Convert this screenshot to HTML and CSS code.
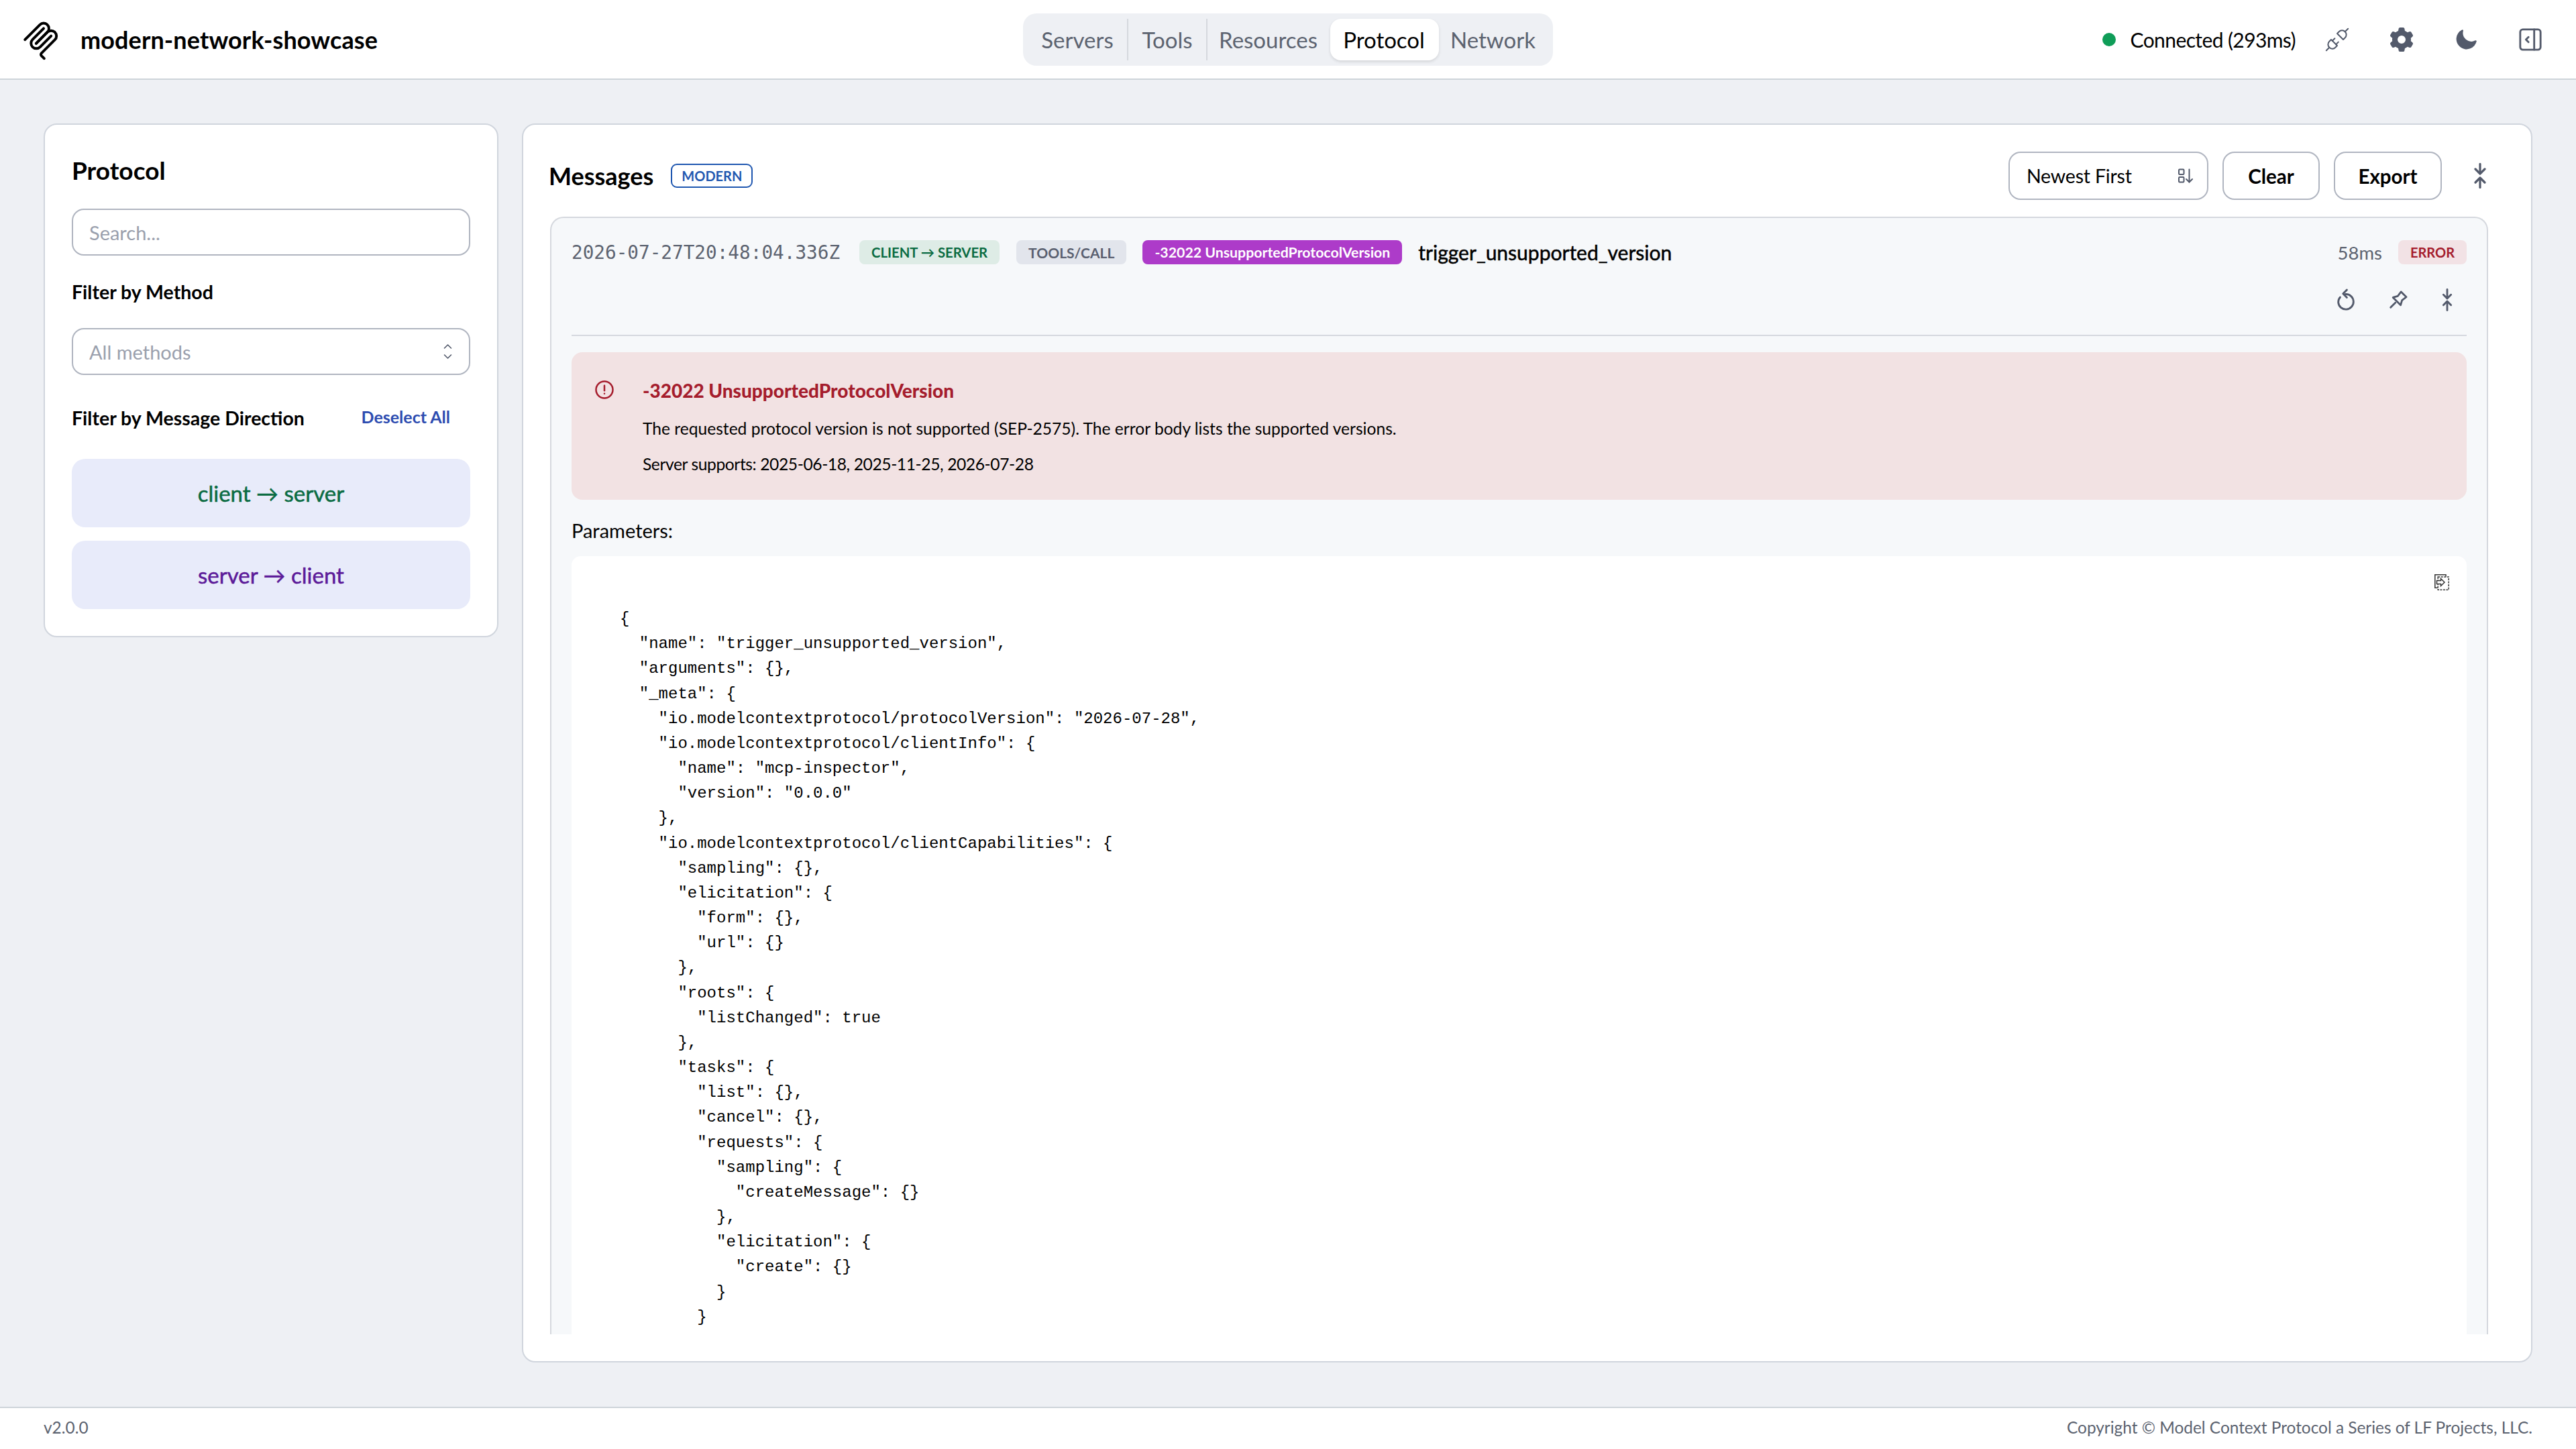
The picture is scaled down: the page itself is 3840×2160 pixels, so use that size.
FILE: index.html
```html
<!DOCTYPE html>
<html lang="en">
<head>
  <meta charset="UTF-8" />
  <title>modern-network-showcase</title>
  <link rel="stylesheet" href="styles.css">
</head>
<body>
  <header class="topbar">
    <div class="brand">
      <svg class="logo" viewBox="0 0 195 195" fill="none" stroke="#000" stroke-width="12" stroke-linecap="round">
        <path d="M25 97.85L92.88 29.97c9.37-9.37 24.57-9.37 33.94 0 9.37 9.37 9.37 24.57 0 33.94L75.56 115.18"/>
        <path d="M76.27 114.47l50.55-50.56c9.37-9.37 24.57-9.37 33.94 0l.36.35c9.37 9.37 9.37 24.57 0 33.94L99.72 159.6c-3.12 3.12-3.12 8.19 0 11.31l12.61 12.61"/>
        <path d="M109.85 46.94L59.65 97.15c-9.37 9.37-9.37 24.57 0 33.94 9.37 9.37 24.57 9.37 33.94 0l50.2-50.21"/>
      </svg>
      <span class="brand-name">modern-network-showcase</span>
    </div>

    <nav class="tabs">
      <span class="tab tab-sep">Servers</span>
      <span class="tab tab-sep">Tools</span>
      <span class="tab">Resources</span>
      <span class="tab tab-active">Protocol</span>
      <span class="tab">Network</span>
    </nav>

    <div class="status">
      <span class="dot"></span>
      <span class="status-text">Connected (293ms)</span>
      <svg class="top-icon plug" viewBox="2 2 20 20" fill="none" stroke="currentColor" stroke-width="1.1" stroke-linecap="round" stroke-linejoin="round">
        <path d="M7 12l5 5l-1.5 1.5a3.536 3.536 0 1 1 -5 -5l1.500 -1.500z"/>
        <path d="M17 12l-5 -5l1.500 -1.500a3.536 3.536 0 1 1 5 5l-1.500 1.500z"/>
        <path d="M3 21l2.500 -2.500"/><path d="M18.500 5.500l2.500 -2.500"/><path d="M10 11l-2 2"/><path d="M13 14l-2 2"/>
      </svg>
      <svg class="top-icon" viewBox="1 1 18 18" fill="currentColor">
        <path fill-rule="evenodd" d="M7.84 1.804A1 1 0 0 1 8.82 1h2.36a1 1 0 0 1 .98.804l.331 1.652a6.993 6.993 0 0 1 1.929 1.115l1.598-.54a1 1 0 0 1 1.186.447l1.18 2.044a1 1 0 0 1-.205 1.251l-1.267 1.113a7.047 7.047 0 0 1 0 2.228l1.267 1.113a1 1 0 0 1 .206 1.25l-1.18 2.045a1 1 0 0 1-1.187.447l-1.598-.54a6.993 6.993 0 0 1-1.929 1.115l-.33 1.652a1 1 0 0 1-.98.804H8.82a1 1 0 0 1-.98-.804l-.331-1.652a6.993 6.993 0 0 1-1.929-1.115l-1.598.54a1 1 0 0 1-1.186-.447l-1.18-2.044a1 1 0 0 1 .205-1.251l1.267-1.114a7.05 7.05 0 0 1 0-2.227L1.821 7.773a1 1 0 0 1-.206-1.25l1.18-2.045a1 1 0 0 1 1.187-.447l1.598.54A6.992 6.992 0 0 1 7.51 3.456l.33-1.652ZM10 13a3 3 0 1 0 0-6 3 3 0 0 0 0 6Z"/>
      </svg>
      <svg class="top-icon" viewBox="0 0 20 20" fill="currentColor">
        <path d="M7.455 2.004a.75.75 0 0 1 .26.77 7 7 0 0 0 9.958 7.967.75.75 0 0 1 1.067.853A8.5 8.5 0 1 1 6.647 1.921a.75.75 0 0 1 .808.083Z"/>
      </svg>
      <svg class="top-icon" viewBox="2.500 2.500 19 19" fill="none" stroke="currentColor" stroke-width="1.5" stroke-linecap="round" stroke-linejoin="round">
        <path d="M4 6a2 2 0 0 1 2-2h12a2 2 0 0 1 2 2v12a2 2 0 0 1-2 2H6a2 2 0 0 1-2-2z"/>
        <path d="M15 4v16"/><path d="M10.500 10l-2 2l2 2"/>
      </svg>
    </div>
  </header>

  <main class="content">
    <aside class="card side">
      <h2 class="side-title">Protocol</h2>
      <div class="field placeholder">Search...</div>
      <div class="label method-label">Filter by Method</div>
      <div class="field placeholder">
        All methods
        <svg class="chevrons" viewBox="0 0 14 24" fill="none" stroke="currentColor" stroke-width="1.6" stroke-linecap="round" stroke-linejoin="round">
          <path d="M2 7l5 -5l5 5"/><path d="M2 17l5 5l5 -5"/>
        </svg>
      </div>
      <div class="direction-head">
        <span class="label">Filter by Message Direction</span>
        <span class="deselect">Deselect All</span>
      </div>
      <div class="dir-btn dir-green">client → server</div>
      <div class="dir-btn dir-purple">server → client</div>
    </aside>

    <section class="card messages">
      <div class="messages-head">
        <h2 class="messages-title">Messages</h2>
        <span class="modern">MODERN</span>
        <div class="head-actions">
          <div class="control sort">
            Newest First
            <svg class="sort-icon" viewBox="0 0 24 22" fill="none" stroke="currentColor" stroke-width="2" stroke-linecap="round" stroke-linejoin="round">
              <rect x="2" y="1.500" width="7.500" height="7.500" rx="1.200"/>
              <rect x="2" y="13" width="7.500" height="7.500" rx="1.200"/>
              <path d="M17.500 1.500v19"/><path d="M13 16l4.500 4.500l4.500 -4.500"/>
            </svg>
          </div>
          <div class="control btn btn-clear">Clear</div>
          <div class="control btn btn-export">Export</div>
          <svg class="collapse-all" viewBox="0 0 24 38" fill="none" stroke="currentColor" stroke-width="3.200" stroke-linecap="round" stroke-linejoin="round">
            <path d="M12 1.500v13"/><path d="M5 9l7 7l7 -7"/>
            <path d="M12 36.500v-13"/><path d="M5 29l7 -7l7 7"/>
          </svg>
        </div>
      </div>

      <article class="entry">
        <div class="entry-row">
          <span class="stamp">2026-07-27T20:48:04.336Z</span>
          <span class="pill pill-green">CLIENT → SERVER</span>
          <span class="pill pill-gray">TOOLS/CALL</span>
          <span class="pill pill-purple">-32022 UnsupportedProtocolVersion</span>
          <span class="tool-name">trigger_unsupported_version</span>
          <span class="duration">58ms</span>
          <span class="pill pill-red">ERROR</span>
        </div>
        <div class="entry-actions">
          <svg class="act-icon act-replay" viewBox="0 0 24 24" fill="none" stroke="currentColor" stroke-width="2" stroke-linecap="round" stroke-linejoin="round">
            <path d="M11.500 6a8 8 0 1 1 -7.500 8.500c0 -2 .7 -3.900 2 -5.300"/><path d="M13 1.500l-4 4l4 4"/>
          </svg>
          <svg class="act-icon" viewBox="0 0 24 24" fill="none" stroke="currentColor" stroke-width="2" stroke-linecap="round" stroke-linejoin="round">
            <path d="M15 3.500l5.500 5.500l-4.500 3.500l-1.500 5l-8 -8l5 -1.500z"/><path d="M9 15l-5 5"/>
          </svg>
          <svg class="act-icon" viewBox="0 0 24 24" fill="none" stroke="currentColor" stroke-width="2" stroke-linecap="round" stroke-linejoin="round">
            <path d="M12 1v8.500"/><path d="M8 6.500l4 4l4 -4"/>
            <path d="M12 23v-8.500"/><path d="M8 17.500l4 -4l4 4"/>
          </svg>
        </div>
        <div class="entry-rule"></div>

        <div class="alert">
          <svg class="alert-icon" viewBox="0 0 24 24" fill="none" stroke="currentColor" stroke-width="2" stroke-linecap="round" stroke-linejoin="round">
            <circle cx="12" cy="12" r="10"/><path d="M12 7v6"/><path d="M12 16.500v.01"/>
          </svg>
          <div class="alert-body">
            <div class="alert-title">-32022 UnsupportedProtocolVersion</div>
            <div class="alert-text">The requested protocol version is not supported (SEP-2575). The error body lists the supported versions.</div>
            <div class="alert-text alert-versions">Server supports: 2025-06-18, 2025-11-25, 2026-07-28</div>
          </div>
        </div>

        <div class="param-label">Parameters:</div>
        <div class="code-box">
          <svg class="copy-icon" viewBox="0 0 22 24" fill="none" stroke="#333" stroke-width="1.500">
            <path d="M17 3.500V.8H.8v19.400h4"/>
            <rect x="5.200" y="4" width="16" height="19.200" stroke-dasharray="3 1.500"/>
            <path d="M3.500 9.500h6V6.500l5.500 5.500l-5.500 5.500v-3h-6z" fill="#fff"/>
          </svg>
          <pre class="code">{
  "name": "trigger_unsupported_version",
  "arguments": {},
  "_meta": {
    "io.modelcontextprotocol/protocolVersion": "2026-07-28",
    "io.modelcontextprotocol/clientInfo": {
      "name": "mcp-inspector",
      "version": "0.0.0"
    },
    "io.modelcontextprotocol/clientCapabilities": {
      "sampling": {},
      "elicitation": {
        "form": {},
        "url": {}
      },
      "roots": {
        "listChanged": true
      },
      "tasks": {
        "list": {},
        "cancel": {},
        "requests": {
          "sampling": {
            "createMessage": {}
          },
          "elicitation": {
            "create": {}
          }
        }
      }
    }
  }
}</pre>
        </div>
      </article>
    </section>
  </main>

  <footer class="footer">
    <span>v2.0.0</span>
    <span>Copyright © Model Context Protocol a Series of LF Projects, LLC.</span>
  </footer>
</body>
</html>
```

FILE: styles.css
```css
* {
  box-sizing: border-box;
}

body {
  margin: 0;
  height: 100vh;
  display: flex;
  flex-direction: column;
  overflow: hidden;
  background: #eef0f4;
  color: #000;
  font-family: 'Lato', 'Noto Sans', sans-serif;
}

/* top bar */
.topbar {
  height: 119px;
  flex: none;
  display: grid;
  grid-template-columns: 1fr auto 1fr;
  align-items: center;
  padding: 0 29px;
  background: #fff;
  border-bottom: 2px solid #ced4da;
}

.brand {
  display: flex;
  align-items: center;
  gap: 27px;
}

.logo {
  width: 64px;
  height: 64px;
}

.brand-name {
  font-size: 36px;
  font-weight: 700;
  letter-spacing: 0.1px;
}

.tabs {
  height: 78px;
  display: grid;
  grid-template-columns: 150px 118px 183px 162px 163px;
  align-items: center;
  padding: 0 7px;
  background: #eef0f4;
  border-radius: 20px;
}

.tab {
  height: 62px;
  display: flex;
  align-items: center;
  justify-content: center;
  font-size: 33px;
  color: #5c6370;
  border-right: 2px solid transparent;
}

.tab-sep {
  border-right-color: #d5d8de;
}

.tab-active {
  background: #fff;
  color: #000;
  border-radius: 16px;
  box-shadow: 0 2px 4px rgba(0, 0, 0, 0.12);
}

.status {
  display: flex;
  align-items: center;
  justify-content: flex-end;
  padding-right: 21px;
  color: #535a6b;
}

.dot {
  width: 20px;
  height: 20px;
  border-radius: 50%;
  background: #0f9d58;
  margin-right: 22px;
}

.status-text {
  font-size: 30px;
  letter-spacing: -0.6px;
  color: #000;
  margin-right: 44px;
}

.top-icon {
  width: 36px;
  height: 36px;
  margin-left: 60px;
}

.plug {
  margin-left: 0;
}

/* panels */
.content {
  flex: 1;
  min-height: 0;
  display: flex;
  align-items: flex-start;
  gap: 35px;
  padding: 65px 65px 66px;
}

.card {
  background: #fff;
  border: 2px solid #d0d5dd;
  border-radius: 20px;
}

.side {
  width: 678px;
  flex: none;
  padding: 40px;
}

.side-title {
  margin: 4px 0 33px;
  font-size: 37px;
  line-height: 48px;
  font-weight: 700;
}

.field {
  height: 70px;
  display: flex;
  align-items: center;
  justify-content: space-between;
  padding: 0 24px;
  border: 2px solid #b0b5c0;
  border-radius: 18px;
  font-size: 29px;
}

.placeholder {
  color: #9aa0ad;
}

.label {
  font-size: 28.500px;
  font-weight: 700;
}

.method-label {
  margin: 35px 0;
  line-height: 38px;
}

.chevrons {
  width: 15px;
  height: 24px;
  color: #535a6b;
}

.direction-head {
  display: flex;
  justify-content: space-between;
  align-items: flex-start;
  height: 60px;
  margin: 47px 0 18px;
  padding-right: 30px;
  white-space: nowrap;
}

.deselect {
  font-size: 25px;
  font-weight: 700;
  color: #2c4bb0;
}

.dir-btn {
  height: 102px;
  display: flex;
  align-items: center;
  justify-content: center;
  background: #e8ebfa;
  border-radius: 20px;
  font-size: 33px;
  -webkit-text-stroke: 0.5px currentColor;
}

.dir-btn + .dir-btn {
  margin-top: 20px;
}

.dir-green {
  color: #0a6b42;
}

.dir-purple {
  color: #5c1a99;
}

.messages {
  flex: 1;
  height: 1847px;
  padding: 40px 64px 40px 40px;
  display: flex;
  flex-direction: column;
}

.messages-head {
  height: 72px;
  margin-bottom: 25px;
  flex: none;
  display: flex;
  align-items: center;
}

.messages-title {
  margin: 0 26px 0 -2px;
  font-size: 36px;
  font-weight: 700;
}

.modern {
  height: 36px;
  padding: 0 14px;
  display: flex;
  align-items: center;
  border: 2px solid #1f57b0;
  border-radius: 9px;
  color: #1f57b0;
  font-size: 20px;
  font-weight: 700;
}

.head-actions {
  margin-left: auto;
  display: flex;
  align-items: center;
  gap: 21px;
}

.control {
  height: 72px;
  display: flex;
  align-items: center;
  border: 2px solid #b0b5c0;
  border-radius: 18px;
}

.sort {
  width: 298px;
  padding: 0 20px 0 25px;
  justify-content: space-between;
  font-size: 28.500px;
  letter-spacing: -0.2px;
}

.sort-icon {
  width: 24px;
  height: 22px;
  color: #535a6b;
}

.btn {
  justify-content: center;
  font-size: 29.500px;
  font-weight: 700;
}

.btn-clear {
  width: 145px;
}

.btn-export {
  width: 161px;
}

.collapse-all {
  width: 24px;
  height: 38px;
  margin-left: 24px;
  color: #535a6b;
}

/* message entry */
.entry {
  flex: 1;
  min-height: 0;
  overflow: hidden;
  padding: 33px 30px 0;
  background: #f6f8fa;
  border: 2px solid #d5d8de;
  border-bottom: none;
  border-radius: 20px 20px 0 0;
}

.entry-row {
  height: 36px;
  display: flex;
  align-items: center;
}

.stamp {
  width: 429px;
  font-family: 'DejaVu Sans Mono', monospace;
  font-size: 27.700px;
  color: #5c6370;
}

.pill {
  height: 36px;
  padding: 0 18px;
  display: flex;
  align-items: center;
  border-radius: 8px;
  font-size: 20px;
  font-weight: 700;
  white-space: nowrap;
}

.pill-green {
  background: #deece6;
  color: #0a6b42;
  font-size: 20.300px;
}

.pill-gray {
  margin-left: 25px;
  background: #e2e5ec;
  color: #5a6070;
  font-size: 21px;
}

.pill-purple {
  margin-left: 24px;
  background: #ad3bc9;
  color: #fff;
  font-size: 21.300px;
}

.pill-red {
  background: #f2e2e5;
  color: #a51d2d;
}

.tool-name {
  margin-left: 24px;
  font-size: 30px;
  -webkit-text-stroke: 0.5px currentColor;
}

.duration {
  margin-left: auto;
  margin-right: 24px;
  font-size: 27.500px;
  color: #5c6370;
}

.entry-actions {
  display: flex;
  justify-content: flex-end;
  gap: 39px;
  margin-top: 36px;
  padding-right: 12px;
  color: #535a6b;
}

.act-icon {
  width: 34px;
  height: 34px;
}

.act-replay {
  margin-right: 5px;
}

.entry-rule {
  height: 2px;
  margin-top: 35px;
  background: #d5d8de;
}

.alert {
  height: 220px;
  margin-top: 24px;
  display: flex;
  padding: 40px 34px;
  background: #f2e2e3;
  border-radius: 16px;
}

.alert-icon {
  width: 30px;
  height: 30px;
  margin: 1px 42px 0 0;
  color: #a51d2d;
}

.alert-title {
  font-size: 28px;
  font-weight: 900;
  line-height: 34px;
  color: #a51d2d;
}

.alert-text {
  margin-top: 24px;
  font-size: 24.600px;
  line-height: 32px;
}

.alert-versions {
  margin-top: 21px;
  letter-spacing: -0.4px;
}

.param-label {
  margin-top: 28px;
  font-size: 29px;
  line-height: 36px;
}

.code-box {
  position: relative;
  margin-top: 20px;
  padding: 75px 72px 0;
  min-height: 1000px;
  background: #fff;
  border-radius: 14px 14px 0 0;
}

.copy-icon {
  position: absolute;
  top: 27px;
  right: 26px;
  width: 22px;
  height: 24px;
  overflow: visible;
}

.code {
  margin: 0;
  font-family: 'Liberation Mono', monospace;
  font-size: 24px;
  line-height: 37.170px;
}

/* footer */
.footer {
  height: 63px;
  flex: none;
  display: flex;
  align-items: center;
  justify-content: space-between;
  padding: 0 65px 4px;
  background: #fff;
  border-top: 2px solid #ced4da;
  font-size: 24.400px;
  color: #5c6370;
}
```
